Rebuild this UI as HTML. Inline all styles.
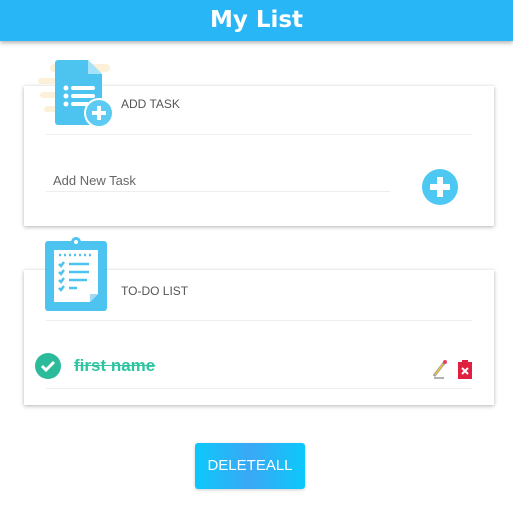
<!DOCTYPE html>
<html><head><style>
body{margin:0;width:513px;height:512px;background:#fff;font-family:"Liberation Sans",sans-serif;position:relative;overflow:hidden}
.hdr{position:absolute;left:0;top:0;width:513px;height:41px;background:#29b6f6;box-shadow:0 2px 4px rgba(0,0,0,.3);color:#fff;text-align:center;font:bold 23px/41px "Comic Sans MS","DejaVu Sans",sans-serif}
.card{position:absolute;left:24px;width:470px;background:#fff;box-shadow:0 1px 4px rgba(0,0,0,.3)}
.lbl{position:absolute;font-size:12px;color:#555}
.line{position:absolute;height:1px;background:#eee}
.btn{position:absolute;left:195px;top:443px;width:110px;height:46px;border-radius:3px;background:linear-gradient(90deg,#0cc8fb,#3aa8f5 50%,#0cc8fb);color:#fff;font-size:15px;text-align:center;line-height:46px;box-shadow:0 1px 3px rgba(0,0,0,.2)}
</style></head><body>
<div class="hdr">My List</div>
<div class="card" style="top:86px;height:140px"></div>
<div class="card" style="top:270px;height:135px"></div>
<svg style="position:absolute;left:36px;top:56px" width="80" height="74">
<g fill="#fdf0d8"><rect x="14" y="8" width="60" height="8" rx="4"/><rect x="2" y="22" width="30" height="6" rx="3"/><rect x="4" y="36" width="26" height="6" rx="3"/><rect x="8" y="50" width="20" height="6" rx="3"/></g>
<path d="M22 4h30l14 14v48a3 3 0 0 1-3 3H22a3 3 0 0 1-3-3V7a3 3 0 0 1 3-3z" fill="#4dc3f0"/>
<path d="M52 4v14h14z" fill="#a5e3fa"/>
<g fill="#fff"><circle cx="30" cy="32" r="2.5"/><circle cx="30" cy="40" r="2.5"/><circle cx="30" cy="48" r="2.5"/><rect x="35" y="30" width="24" height="4" rx="2"/><rect x="35" y="38" width="24" height="4" rx="2"/><rect x="35" y="46" width="18" height="4" rx="2"/></g>
<circle cx="63" cy="57" r="14" fill="#5ccaf3" stroke="#fff" stroke-width="2"/>
<path d="M63 50v14M56 57h14" stroke="#fff" stroke-width="4"/>
</svg>
<div class="lbl" style="left:121px;top:97px">ADD TASK</div>
<div class="line" style="left:46px;top:134px;width:426px"></div>
<div class="lbl" style="left:53px;top:173px;font-size:13px;color:#666">Add New Task</div>
<div class="line" style="left:46px;top:191px;width:344px"></div>
<svg style="position:absolute;left:421px;top:168px" width="38" height="38"><circle cx="19" cy="19" r="18" fill="#4dc8f2"/><path d="M19 9v20M9 19h20" stroke="#fff" stroke-width="6"/></svg>
<svg style="position:absolute;left:44px;top:236px" width="66" height="76">
<rect x="1" y="5" width="62" height="70" rx="3" fill="#4dc3f0"/>
<path d="M10 14h44v44l-8 8H10z" fill="#fff"/>
<path d="M46 66v-8h8z" fill="#a5d8f2"/>
<path d="M22 6h20v8H22z" fill="#4dc3f0"/><circle cx="32" cy="6" r="5" fill="#4dc3f0"/><circle cx="32" cy="6" r="2" fill="#fff"/>
<g stroke="#4dc3f0" stroke-width="2.5" fill="none"><path d="M15 19h34" stroke-dasharray="2 3"/><path d="M15 28l2 2 3-4M15 36l2 2 3-4M15 44l2 2 3-4M15 52l2 2 3-4"/><path d="M25 28h20M25 36h20M25 44h18M25 52h8"/></g>
</svg>
<div class="lbl" style="left:121px;top:284px">TO-DO LIST</div>
<div class="line" style="left:46px;top:320px;width:426px"></div>
<svg style="position:absolute;left:35px;top:353px" width="26" height="26"><circle cx="13" cy="13" r="13" fill="#2bbb9b"/><path d="M7 13l4 4 8-8" stroke="#fff" stroke-width="3" fill="none"/></svg>
<div style="position:absolute;left:74px;top:356px;font-weight:bold;font-size:17px;color:#2ec4a0;text-decoration:line-through">first name</div>
<div class="line" style="left:46px;top:388px;width:426px"></div>
<svg style="position:absolute;left:430px;top:358px" width="18" height="22"><path d="M4 18L14 5" stroke="#999" stroke-width="3"/><path d="M5 17L13 6" stroke="#f0c040" stroke-width="1.5"/><circle cx="15" cy="4" r="2" fill="#e84060"/><path d="M4 20h10" stroke="#666" stroke-width="1"/></svg>
<svg style="position:absolute;left:457px;top:359px" width="16" height="21"><rect x="1" y="3" width="14" height="17" fill="#e02040"/><rect x="5" y="1" width="6" height="3" fill="#e02040"/><path d="M5 9l6 6M11 9l-6 6" stroke="#fff" stroke-width="2"/></svg>
<div class="btn">DELETEALL</div>
</body></html>
